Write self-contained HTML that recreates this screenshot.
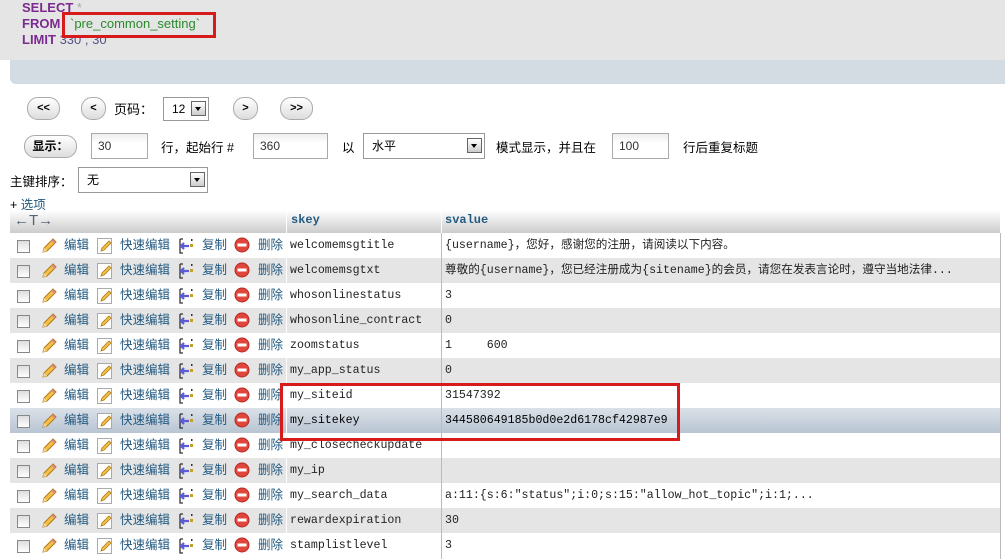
<!DOCTYPE html>
<html><head><meta charset="utf-8"><style>
body{margin:0;width:1005px;height:559px;overflow:hidden;background:#fff;font-family:"Liberation Sans","Noto Sans CJK SC",sans-serif;font-size:12px;color:#000;position:relative}
.a{position:absolute;white-space:nowrap}
.btn{position:absolute;height:21px;border:1px solid #aaa;border-radius:11px;background:linear-gradient(#fff,#ddd);font-weight:bold;font-size:11px;text-align:center;line-height:21px;color:#000}
.inp{position:absolute;height:23px;border:1px solid #aaa;background:linear-gradient(#eee,#fff 40%);box-sizing:border-box;padding-left:6px;line-height:22px;font-size:12px;color:#333}
.sel{position:absolute;height:24px;border:1px solid #999;background:#fff;box-sizing:border-box;padding-left:8px;line-height:22px}
.sel i{position:absolute;right:2px;top:3px;width:15px;height:15px;border:1px solid #666;background:linear-gradient(#fff,#ccc);box-sizing:border-box}
.sel i:after{content:"";position:absolute;left:3px;top:5px;border:3.5px solid transparent;border-top:4px solid #000}
.row{position:absolute;left:10px;width:990px;height:25px}
.row span{position:absolute;top:0;line-height:25px;white-space:nowrap}
.l{color:#235a81;font-size:12.5px}
.k{left:280px;font-family:"Liberation Mono",monospace;font-size:11.6px;color:#222}
.v{left:435px;font-family:"Liberation Mono","Noto Sans CJK SC",monospace;font-size:11.6px;color:#222}
.cb{position:absolute;left:7px;top:7px;width:11px;height:11px;border:1px solid #888;background:linear-gradient(#ddd,#fff)}
</style></head><body>
<div class="a" style="left:0;top:0;width:1005px;height:60px;background:#e5e5e5"></div>
<div class="a" style="left:10px;top:60px;width:995px;height:24px;background:#d3dce3;border-bottom-left-radius:6px"></div>
<div class="a" style="left:22px;top:0;font-size:13px;font-weight:bold;color:#7b2b8f;line-height:16px">SELECT <span style="color:#aaa;font-weight:normal">*</span></div>
<div class="a" style="left:22px;top:16px;font-size:13px;font-weight:bold;color:#7b2b8f;line-height:16px">FROM</div>
<div class="a" style="left:70px;top:16px;font-size:13px;color:#2a8a2a;line-height:16px">`pre_common_setting`</div>
<div class="a" style="left:22px;top:32px;font-size:13px;line-height:16px"><b style="color:#7b2b8f">LIMIT</b> <span style="color:#558">330 , 30</span></div>
<div class="a" style="left:62px;top:12px;width:148px;height:20px;border:3px solid #d71a1a"></div>

<div class="btn" style="left:27px;top:97px;width:31px">&lt;&lt;</div>
<div class="btn" style="left:81px;top:97px;width:23px">&lt;</div>
<div class="a" style="left:114px;top:99px;font-size:13px">页码：</div>
<div class="sel" style="left:163px;top:97px;width:46px">12<i></i></div>
<div class="btn" style="left:233px;top:97px;width:23px">&gt;</div>
<div class="btn" style="left:280px;top:97px;width:31px">&gt;&gt;</div>

<div class="btn" style="left:24px;top:135px;width:51px;font-size:12px">显示：</div>
<div class="inp" style="left:91px;top:133px;width:57px;height:26px;line-height:25px">30</div>
<div class="a" style="left:161px;top:137px;font-size:12.5px">行，起始行 #</div>
<div class="inp" style="left:253px;top:133px;width:75px;height:26px;line-height:25px">360</div>
<div class="a" style="left:342px;top:137px;font-size:12.5px">以</div>
<div class="sel" style="left:363px;top:133px;width:122px;height:26px;line-height:24px">水平<i style="top:4px"></i></div>
<div class="a" style="left:496px;top:137px;font-size:12.5px">模式显示，并且在</div>
<div class="inp" style="left:612px;top:133px;width:57px;height:26px;line-height:25px">100</div>
<div class="a" style="left:683px;top:137px;font-size:12.5px">行后重复标题</div>

<div class="a" style="left:10px;top:171px;font-size:12.5px">主键排序：</div>
<div class="sel" style="left:78px;top:167px;width:130px;height:26px;line-height:24px">无<i style="top:4px"></i></div>
<div class="a" style="left:10px;top:194px;font-size:12.5px">+ <span style="color:#235a81">选项</span></div>

<div class="a" style="left:10px;top:210px;width:990px;height:23px;background:linear-gradient(#fff,#ccc)"></div>
<div class="a" style="left:286px;top:210px;width:1px;height:23px;background:#fff"></div>
<div class="a" style="left:441px;top:210px;width:1px;height:23px;background:#fff"></div>
<div class="a" style="left:14px;top:211px;font-size:15px;color:#567;line-height:20px">←T→</div>
<div class="a" style="left:291px;top:213px;font-family:'Liberation Mono',monospace;font-weight:bold;font-size:12px;color:#235a81">skey</div>
<div class="a" style="left:445px;top:213px;font-family:'Liberation Mono',monospace;font-weight:bold;font-size:12px;color:#235a81">svalue</div>

<svg width="0" height="0" style="position:absolute"><defs>
<g id="pen"><path d="M3 15 L4 11 L13 2 L16 5 L7 14 Z" fill="#f4c04a" stroke="#b07a10" stroke-width="1"/><path d="M3 15 L4 11 L7 14 Z" fill="#f3d9a8"/><path d="M12 3 L15 6" stroke="#d88" stroke-width="2"/></g>
<g id="ed"><rect x="1.5" y="1.5" width="14" height="15" fill="#fff" stroke="#aaa"/><path d="M5 14 L6 11 L13 4 L15 6 L8 13 Z" fill="#f4c04a" stroke="#b07a10" stroke-width=".8"/></g>
<g id="cp"><path d="M2 2 H5 M2 2 V16 H5" stroke="#333" fill="none" stroke-width="1.3"/><path d="M3 9 H11 M6 6 L3 9 L6 12" stroke="#5b5bd6" stroke-width="2.2" fill="none"/><rect x="12" y="7" width="3" height="3" fill="#c8a020"/><rect x="13" y="2" width="1.5" height="2" fill="#333"/></g>
<g id="del"><circle cx="8" cy="8" r="7" fill="#e0463c" stroke="#b82a22"/><rect x="3.5" y="6.5" width="9" height="3" fill="#fff"/></g>
</defs></svg>

<div class="row" style="top:233px;background:#fff"><div class="cb"></div><svg class="a" style="left:30px;top:4px" width="17" height="17"><use href="#pen"/></svg><span class="l" style="left:54px">编辑</span><svg class="a" style="left:86px;top:4px" width="17" height="18"><use href="#ed"/></svg><span class="l" style="left:110px">快速编辑</span><svg class="a" style="left:168px;top:4px" width="17" height="18"><use href="#cp"/></svg><span class="l" style="left:192px">复制</span><svg class="a" style="left:224px;top:4px" width="17" height="17"><use href="#del"/></svg><span class="l" style="left:248px">删除</span><span class="k">welcomemsgtitle</span><span class="v">{username}，您好，感谢您的注册，请阅读以下内容。</span></div>
<div class="row" style="top:258px;background:#e5e5e5"><div class="cb"></div><svg class="a" style="left:30px;top:4px" width="17" height="17"><use href="#pen"/></svg><span class="l" style="left:54px">编辑</span><svg class="a" style="left:86px;top:4px" width="17" height="18"><use href="#ed"/></svg><span class="l" style="left:110px">快速编辑</span><svg class="a" style="left:168px;top:4px" width="17" height="18"><use href="#cp"/></svg><span class="l" style="left:192px">复制</span><svg class="a" style="left:224px;top:4px" width="17" height="17"><use href="#del"/></svg><span class="l" style="left:248px">删除</span><span class="k">welcomemsgtxt</span><span class="v">尊敬的{username}，您已经注册成为{sitename}的会员，请您在发表言论时，遵守当地法律...</span></div>
<div class="row" style="top:283px;background:#fff"><div class="cb"></div><svg class="a" style="left:30px;top:4px" width="17" height="17"><use href="#pen"/></svg><span class="l" style="left:54px">编辑</span><svg class="a" style="left:86px;top:4px" width="17" height="18"><use href="#ed"/></svg><span class="l" style="left:110px">快速编辑</span><svg class="a" style="left:168px;top:4px" width="17" height="18"><use href="#cp"/></svg><span class="l" style="left:192px">复制</span><svg class="a" style="left:224px;top:4px" width="17" height="17"><use href="#del"/></svg><span class="l" style="left:248px">删除</span><span class="k">whosonlinestatus</span><span class="v">3</span></div>
<div class="row" style="top:308px;background:#e5e5e5"><div class="cb"></div><svg class="a" style="left:30px;top:4px" width="17" height="17"><use href="#pen"/></svg><span class="l" style="left:54px">编辑</span><svg class="a" style="left:86px;top:4px" width="17" height="18"><use href="#ed"/></svg><span class="l" style="left:110px">快速编辑</span><svg class="a" style="left:168px;top:4px" width="17" height="18"><use href="#cp"/></svg><span class="l" style="left:192px">复制</span><svg class="a" style="left:224px;top:4px" width="17" height="17"><use href="#del"/></svg><span class="l" style="left:248px">删除</span><span class="k">whosonline_contract</span><span class="v">0</span></div>
<div class="row" style="top:333px;background:#fff"><div class="cb"></div><svg class="a" style="left:30px;top:4px" width="17" height="17"><use href="#pen"/></svg><span class="l" style="left:54px">编辑</span><svg class="a" style="left:86px;top:4px" width="17" height="18"><use href="#ed"/></svg><span class="l" style="left:110px">快速编辑</span><svg class="a" style="left:168px;top:4px" width="17" height="18"><use href="#cp"/></svg><span class="l" style="left:192px">复制</span><svg class="a" style="left:224px;top:4px" width="17" height="17"><use href="#del"/></svg><span class="l" style="left:248px">删除</span><span class="k">zoomstatus</span><span class="v">1&nbsp;&nbsp;&nbsp;&nbsp;&nbsp;600</span></div>
<div class="row" style="top:358px;background:#e5e5e5"><div class="cb"></div><svg class="a" style="left:30px;top:4px" width="17" height="17"><use href="#pen"/></svg><span class="l" style="left:54px">编辑</span><svg class="a" style="left:86px;top:4px" width="17" height="18"><use href="#ed"/></svg><span class="l" style="left:110px">快速编辑</span><svg class="a" style="left:168px;top:4px" width="17" height="18"><use href="#cp"/></svg><span class="l" style="left:192px">复制</span><svg class="a" style="left:224px;top:4px" width="17" height="17"><use href="#del"/></svg><span class="l" style="left:248px">删除</span><span class="k">my_app_status</span><span class="v">0</span></div>
<div class="row" style="top:383px;background:#fff"><div class="cb"></div><svg class="a" style="left:30px;top:4px" width="17" height="17"><use href="#pen"/></svg><span class="l" style="left:54px">编辑</span><svg class="a" style="left:86px;top:4px" width="17" height="18"><use href="#ed"/></svg><span class="l" style="left:110px">快速编辑</span><svg class="a" style="left:168px;top:4px" width="17" height="18"><use href="#cp"/></svg><span class="l" style="left:192px">复制</span><svg class="a" style="left:224px;top:4px" width="17" height="17"><use href="#del"/></svg><span class="l" style="left:248px">删除</span><span class="k">my_siteid</span><span class="v">31547392</span></div>
<div class="row" style="top:408px;background:linear-gradient(#dbe1e8,#b9c5d3)"><div class="cb"></div><svg class="a" style="left:30px;top:4px" width="17" height="17"><use href="#pen"/></svg><span class="l" style="left:54px">编辑</span><svg class="a" style="left:86px;top:4px" width="17" height="18"><use href="#ed"/></svg><span class="l" style="left:110px">快速编辑</span><svg class="a" style="left:168px;top:4px" width="17" height="18"><use href="#cp"/></svg><span class="l" style="left:192px">复制</span><svg class="a" style="left:224px;top:4px" width="17" height="17"><use href="#del"/></svg><span class="l" style="left:248px">删除</span><span class="k" style="color:#000">my_sitekey</span><span class="v" style="color:#000">344580649185b0d0e2d6178cf42987e9</span></div>
<div class="row" style="top:433px;background:#fff"><div class="cb"></div><svg class="a" style="left:30px;top:4px" width="17" height="17"><use href="#pen"/></svg><span class="l" style="left:54px">编辑</span><svg class="a" style="left:86px;top:4px" width="17" height="18"><use href="#ed"/></svg><span class="l" style="left:110px">快速编辑</span><svg class="a" style="left:168px;top:4px" width="17" height="18"><use href="#cp"/></svg><span class="l" style="left:192px">复制</span><svg class="a" style="left:224px;top:4px" width="17" height="17"><use href="#del"/></svg><span class="l" style="left:248px">删除</span><span class="k">my_closecheckupdate</span><span class="v"></span></div>
<div class="row" style="top:458px;background:#e5e5e5"><div class="cb"></div><svg class="a" style="left:30px;top:4px" width="17" height="17"><use href="#pen"/></svg><span class="l" style="left:54px">编辑</span><svg class="a" style="left:86px;top:4px" width="17" height="18"><use href="#ed"/></svg><span class="l" style="left:110px">快速编辑</span><svg class="a" style="left:168px;top:4px" width="17" height="18"><use href="#cp"/></svg><span class="l" style="left:192px">复制</span><svg class="a" style="left:224px;top:4px" width="17" height="17"><use href="#del"/></svg><span class="l" style="left:248px">删除</span><span class="k">my_ip</span><span class="v"></span></div>
<div class="row" style="top:483px;background:#fff"><div class="cb"></div><svg class="a" style="left:30px;top:4px" width="17" height="17"><use href="#pen"/></svg><span class="l" style="left:54px">编辑</span><svg class="a" style="left:86px;top:4px" width="17" height="18"><use href="#ed"/></svg><span class="l" style="left:110px">快速编辑</span><svg class="a" style="left:168px;top:4px" width="17" height="18"><use href="#cp"/></svg><span class="l" style="left:192px">复制</span><svg class="a" style="left:224px;top:4px" width="17" height="17"><use href="#del"/></svg><span class="l" style="left:248px">删除</span><span class="k">my_search_data</span><span class="v">a:11:{s:6:"status";i:0;s:15:"allow_hot_topic";i:1;...</span></div>
<div class="row" style="top:508px;background:#e5e5e5"><div class="cb"></div><svg class="a" style="left:30px;top:4px" width="17" height="17"><use href="#pen"/></svg><span class="l" style="left:54px">编辑</span><svg class="a" style="left:86px;top:4px" width="17" height="18"><use href="#ed"/></svg><span class="l" style="left:110px">快速编辑</span><svg class="a" style="left:168px;top:4px" width="17" height="18"><use href="#cp"/></svg><span class="l" style="left:192px">复制</span><svg class="a" style="left:224px;top:4px" width="17" height="17"><use href="#del"/></svg><span class="l" style="left:248px">删除</span><span class="k">rewardexpiration</span><span class="v">30</span></div>
<div class="row" style="top:533px;background:#fff"><div class="cb"></div><svg class="a" style="left:30px;top:4px" width="17" height="17"><use href="#pen"/></svg><span class="l" style="left:54px">编辑</span><svg class="a" style="left:86px;top:4px" width="17" height="18"><use href="#ed"/></svg><span class="l" style="left:110px">快速编辑</span><svg class="a" style="left:168px;top:4px" width="17" height="18"><use href="#cp"/></svg><span class="l" style="left:192px">复制</span><svg class="a" style="left:224px;top:4px" width="17" height="17"><use href="#del"/></svg><span class="l" style="left:248px">删除</span><span class="k">stamplistlevel</span><span class="v">3</span></div>

<div class="a" style="left:286px;top:233px;width:1px;height:326px;background:#fff"></div>
<div class="a" style="left:441px;top:233px;width:1px;height:326px;background:#bbb"></div>
<div class="a" style="left:1000px;top:233px;width:1px;height:326px;background:#bbb"></div>
<div class="a" style="left:280px;top:383px;width:394px;height:52px;border:3px solid #d71a1a"></div>
</body></html>
